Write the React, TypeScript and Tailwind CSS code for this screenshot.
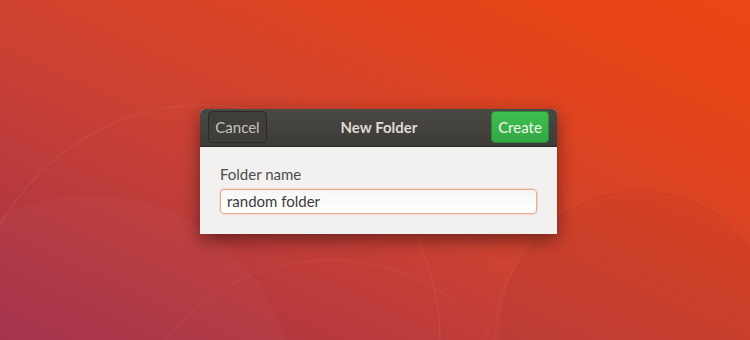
import React from 'react';

const font = { fontFamily: 'Lato, "Noto Sans", sans-serif' };

const Wallpaper: React.FC = () => (
  <svg className="absolute inset-0" width="750" height="340" viewBox="0 0 750 340">
    <defs>
      <linearGradient id="wp" x1="0" y1="1" x2="1" y2="0">
        <stop offset="0" stopColor="#a2304a" />
        <stop offset="0.45" stopColor="#cc4233" />
        <stop offset="0.8" stopColor="#e5441a" />
        <stop offset="1" stopColor="#ea4716" />
      </linearGradient>
    </defs>
    <rect width="750" height="340" fill="url(#wp)" />
    <circle cx="205" cy="340" r="235" fill="none" stroke="#ffffff" strokeOpacity="0.07" strokeWidth="1.2" />
    <circle cx="90" cy="400" r="205" fill="#ffffff" fillOpacity="0.025" />
    <circle cx="640" cy="330" r="140" fill="#000000" fillOpacity="0.03" />
    <circle cx="640" cy="340" r="145" fill="none" stroke="#ffffff" strokeOpacity="0.045" strokeWidth="1.2" />
    <circle cx="330" cy="470" r="210" fill="none" stroke="#ffffff" strokeOpacity="0.05" strokeWidth="1.2" />
  </svg>
);

const App: React.FC = () => {
  return (
    <div className="relative w-[750px] h-[340px] overflow-hidden" style={font}>
      <Wallpaper />
      <div className="relative flex h-full items-center justify-center pl-[7px] pt-[2px]">
        <div className="w-[357px] rounded-t-[5px] bg-[#f2f1ef] shadow-[0_6px_18px_rgba(0,0,0,0.45)]">
          <div className="flex h-[38px] items-center justify-between rounded-t-[5px] border-b border-[#2a2926] bg-[linear-gradient(#4a4944,#3c3b37)] px-[8px]">
            <button className="h-[32px] w-[59px] rounded-[4px] border border-[#2b2a27] bg-[#3f3e3a] text-[15px] text-[#c3c3bd]">
              Cancel
            </button>
            <span className="text-[15px] font-bold text-[#dfdbd2]">New Folder</span>
            <button className="h-[32px] w-[58px] rounded-[4px] border border-[#2a8a36] bg-[linear-gradient(#3fbf4f,#33a843)] text-[15px] text-[#f4f8f0]">
              Create
            </button>
          </div>
          <div className="px-[20px] pt-[19px] pb-[20px]">
            <div className="mb-[7px] text-[15px] leading-[16px] text-[#4c4c4c]">Folder name</div>
            <div className="flex h-[25px] items-center rounded-[4px] border border-[#eda88f] bg-[linear-gradient(#f6f6f5,#ffffff)] px-[6px] text-[15px] text-[#3c3c3c] shadow-[0_0_0_1px_rgba(240,160,130,0.25)]">
              random folder
            </div>
          </div>
        </div>
      </div>
    </div>
  );
};

export default App;
